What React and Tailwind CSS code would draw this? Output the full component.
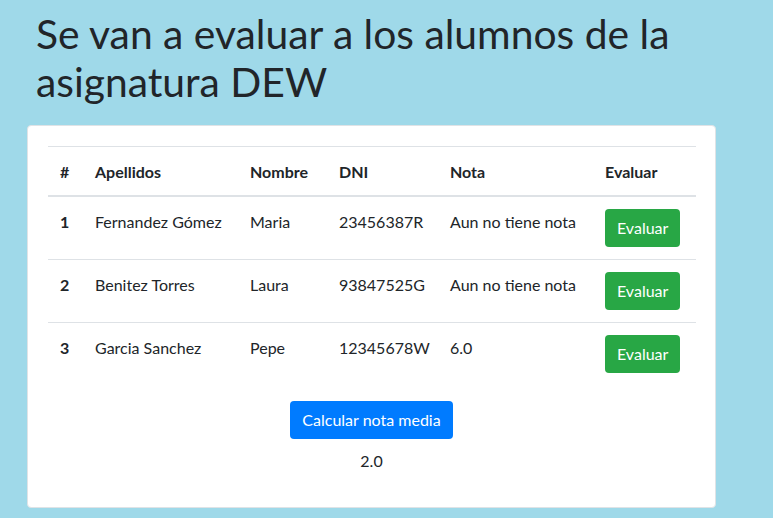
export default function App() {
  const rows = [
    { n: 1, ap: "Fernandez Gómez", no: "Maria", dni: "23456387R", nota: "Aun no tiene nota" },
    { n: 2, ap: "Benitez Torres", no: "Laura", dni: "93847525G", nota: "Aun no tiene nota" },
    { n: 3, ap: "Garcia Sanchez", no: "Pepe", dni: "12345678W", nota: "6.0" },
  ];
  return (
    <div className="min-h-[518px] w-[773px] bg-[#9fd9e9] pt-[10px] text-[#212529]" style={{ fontFamily: "Lato, 'Noto Sans', sans-serif" }}>
      <h1 className="ml-[36px] text-[40.8px] leading-[48px] font-normal">
        Se van a evaluar a los alumnos de la
        <br />
        asignatura DEW
      </h1>
      <div className="ml-[27px] mt-[19px] w-[689px] rounded-[4px] border border-[#dfe3e6] bg-white px-[20px] pt-[20px] pb-[34px]">
        <table className="w-[648px] table-fixed border-collapse text-[16px] leading-[24px]">
          <colgroup>
            <col className="w-[35px]" />
            <col className="w-[155px]" />
            <col className="w-[89px]" />
            <col className="w-[111px]" />
            <col className="w-[155px]" />
            <col className="w-[103px]" />
          </colgroup>
          <thead>
            <tr className="border-t border-b-2 border-t-[#dee2e6] border-b-[#dee2e6]">
              {["#", "Apellidos", "Nombre", "DNI", "Nota", "Evaluar"].map((h) => (
                <th key={h} className="px-[12px] pt-[13px] pb-[11px] text-left align-bottom font-bold">
                  {h}
                </th>
              ))}
            </tr>
          </thead>
          <tbody>
            {rows.map((r, i) => (
              <tr key={r.n} className={i < 2 ? "border-b border-[#dee2e6]" : ""}>
                <td className="px-[12px] pt-[13px] pb-[11px] align-top font-bold">{r.n}</td>
                <td className="px-[12px] pt-[13px] pb-[11px] align-top whitespace-nowrap">{r.ap}</td>
                <td className="px-[12px] pt-[13px] pb-[11px] align-top">{r.no}</td>
                <td className="px-[12px] pt-[13px] pb-[11px] align-top">{r.dni}</td>
                <td className="px-[12px] pt-[13px] pb-[11px] align-top whitespace-nowrap">{r.nota}</td>
                <td className="px-[12px] py-[12px] align-top">
                  <button className="h-[38px] rounded-[4px] bg-[#28a745] px-[12px] text-[16px] text-white">Evaluar</button>
                </td>
              </tr>
            ))}
          </tbody>
        </table>
        <div className="mt-[16px] flex flex-col items-center">
          <button className="h-[38px] rounded-[4px] bg-[#007bff] px-[12px] text-[16px] text-white">Calcular nota media</button>
          <div className="mt-[10px] leading-[24px]">2.0</div>
        </div>
      </div>
    </div>
  );
}
